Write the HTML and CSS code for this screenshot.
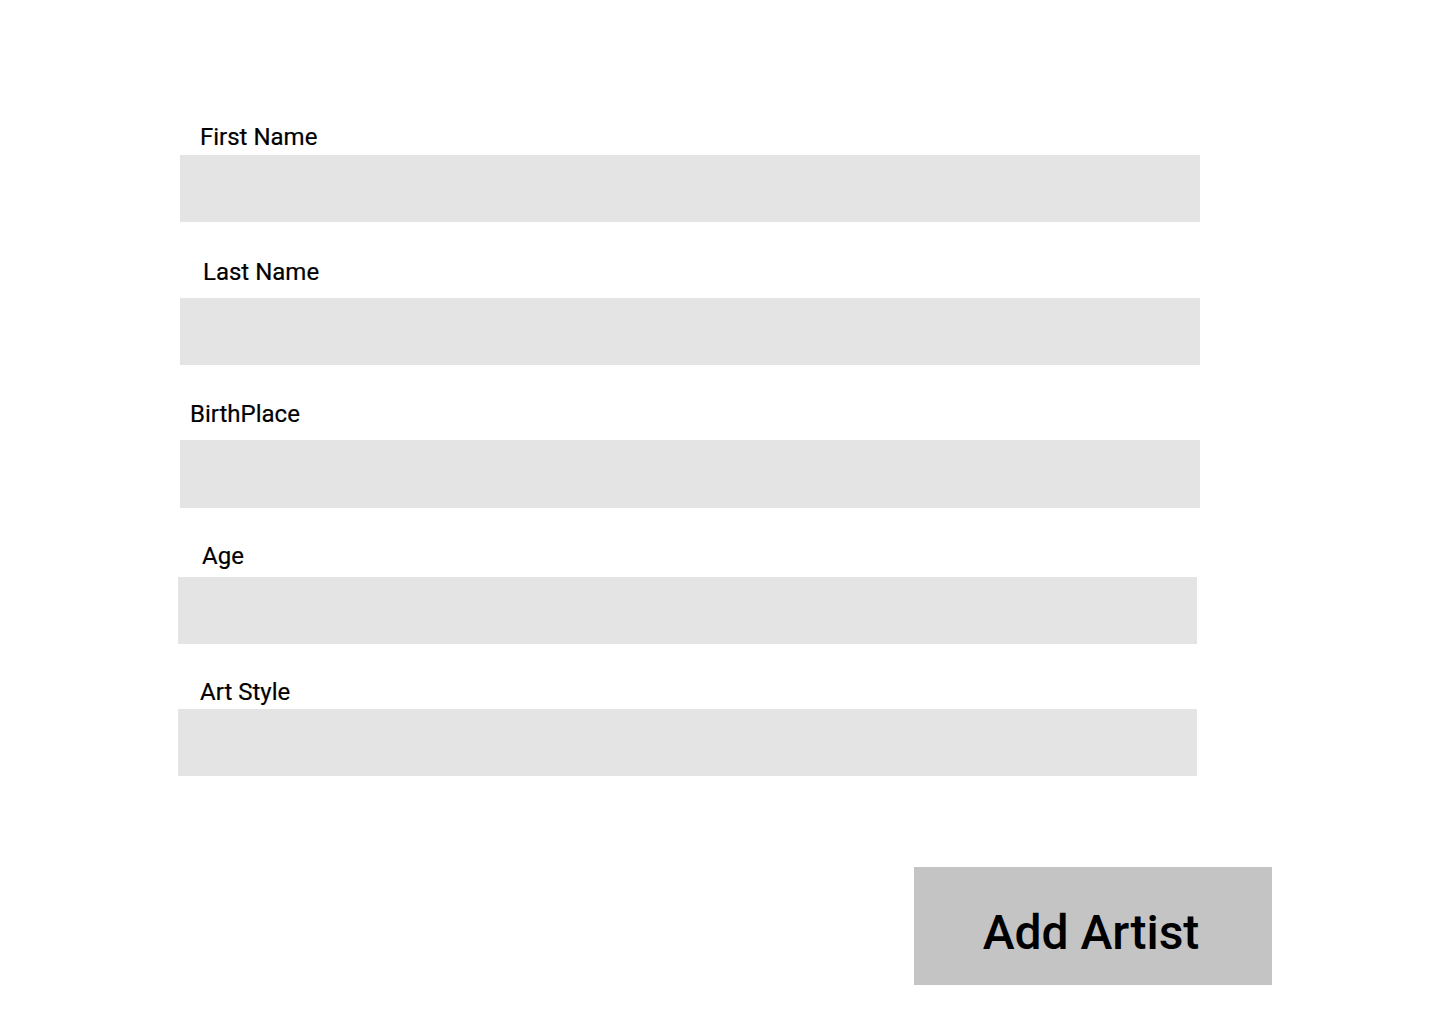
FILE: index.html
```html
<!DOCTYPE html>
<html lang="en">
<head>
<meta charset="utf-8">
<title>Add Artist</title>
<link rel="stylesheet" href="styles.css">
</head>
<body>
<main class="page">
  <form class="artist-form">
    <div class="field field--first">
      <label class="field-label" for="first">First Name</label>
      <input class="field-input" id="first" type="text">
    </div>
    <div class="field field--last">
      <label class="field-label" for="last">Last Name</label>
      <input class="field-input" id="last" type="text">
    </div>
    <div class="field field--birth">
      <label class="field-label" for="birth">BirthPlace</label>
      <input class="field-input" id="birth" type="text">
    </div>
    <div class="field field--age">
      <label class="field-label" for="age">Age</label>
      <input class="field-input" id="age" type="text">
    </div>
    <div class="field field--style">
      <label class="field-label" for="style">Art Style</label>
      <input class="field-input" id="style" type="text">
    </div>
    <button class="submit-btn" type="button">Add Artist</button>
  </form>
</main>
</body>
</html>
```
FILE: styles.css
```css
html, body {
  margin: 0;
  padding: 0;
  background: #ffffff;
}

body {
  font-family: Roboto, "Liberation Sans", sans-serif;
  color: #000000;
}

.page {
  padding: 123px 0 0 180px;
}

.artist-form {
  display: flex;
  flex-direction: column;
  align-items: flex-start;
}

.field {
  display: flex;
  flex-direction: column;
  width: 1020px;
}

.field-label {
  display: block;
  font-size: 24px;
  line-height: 28px;
  height: 28px;
  font-weight: 400;
  -webkit-text-stroke: 0.2px #000000;
}

.field-input {
  display: block;
  box-sizing: border-box;
  width: 100%;
  height: 67px;
  margin: 0;
  border: 0;
  padding: 0 20px;
  background: #e4e4e4;
  font: inherit;
  font-size: 24px;
  outline: none;
}

.field--first .field-label { padding-left: 20px; margin-bottom: 4px; }

.field--last { margin-top: 36px; }
.field--last .field-label { padding-left: 23px; margin-bottom: 12px; }

.field--birth { margin-top: 35px; }
.field--birth .field-label { padding-left: 10px; margin-bottom: 12px; }
.field--birth .field-input { height: 68px; }

.field--age { margin-top: 34px; margin-left: -2px; width: 1019px; }
.field--age .field-label { padding-left: 24px; margin-bottom: 7px; }

.field--style { margin-top: 34px; margin-left: -2px; width: 1019px; }
.field--style .field-label { padding-left: 22px; margin-bottom: 3px; }

.submit-btn {
  margin: 91px 0 0 734px;
  width: 358px;
  height: 118px;
  border: 0;
  padding: 12px 4px 0 0;
  background: #c4c4c4;
  font-family: Roboto, "Liberation Sans", sans-serif;
  font-size: 48px;
  font-weight: 500;
  color: #000000;
  cursor: pointer;
}
```
